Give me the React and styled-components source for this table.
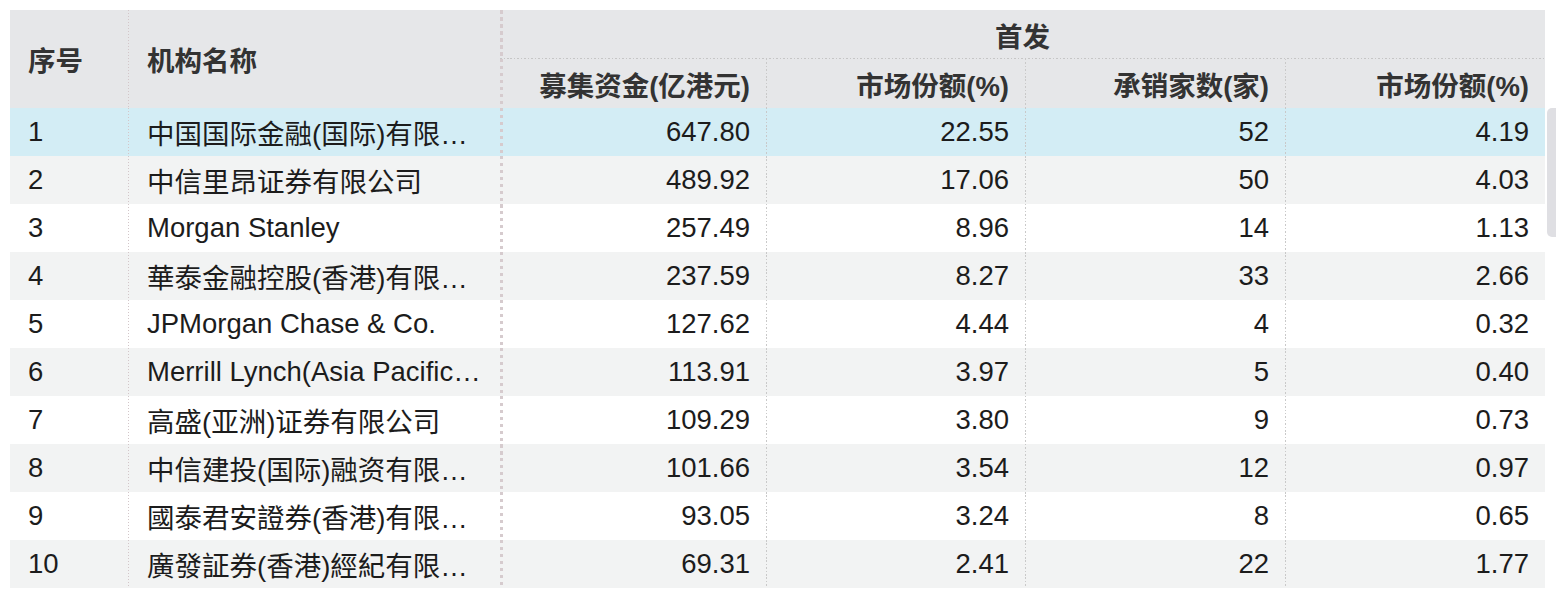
import React from 'react';
import styled, { createGlobalStyle, css } from 'styled-components';

const GlobalStyle = createGlobalStyle`
    html, body {
        margin: 0;
        padding: 0;
        background: #ffffff;
    }
    body {
        font-family: "Liberation Sans", "Noto Sans CJK SC", sans-serif;
    }
`;

const rows = [
    ['1', '中国国际金融(国际)有限公司', '647.80', '22.55', '52', '4.19'],
    ['2', '中信里昂证券有限公司', '489.92', '17.06', '50', '4.03'],
    ['3', 'Morgan Stanley', '257.49', '8.96', '14', '1.13'],
    ['4', '華泰金融控股(香港)有限公司', '237.59', '8.27', '33', '2.66'],
    ['5', 'JPMorgan Chase & Co.', '127.62', '4.44', '4', '0.32'],
    ['6', 'Merrill Lynch(Asia Pacific) Limited', '113.91', '3.97', '5', '0.40'],
    ['7', '高盛(亚洲)证券有限公司', '109.29', '3.80', '9', '0.73'],
    ['8', '中信建投(国际)融资有限公司', '101.66', '3.54', '12', '0.97'],
    ['9', '國泰君安證券(香港)有限公司', '93.05', '3.24', '8', '0.65'],
    ['10', '廣發証券(香港)經紀有限公司', '69.31', '2.41', '22', '1.77'],
];

// column separators drawn at the left edge of a cell
const seps = {
    pink: 'repeating-linear-gradient(to bottom, #d3c6c9 0 1px, transparent 1px 3px)',
    thick: 'repeating-linear-gradient(to bottom, #d6cbce 0 3.5px, transparent 3.5px 7px)',
    gray: 'repeating-linear-gradient(to bottom, #c9c9c9 0 1.5px, transparent 1.5px 3.4px)',
};
const sepWidth = { pink: '1px', thick: '3px', gray: '1px' };

const sepStyle = css`
    ${p => p.$sep && css`
        background-image: ${seps[p.$sep]};
        background-size: ${sepWidth[p.$sep]} 100%;
        background-repeat: no-repeat;
        background-position: 0 0;
    `}
`;

const Page = styled.div`
    position: relative;
    padding: 10px 11px 4px 10px;
`;

const Table = styled.table`
    width: 1535px;
    table-layout: fixed;
    border-collapse: collapse;
    border-spacing: 0;
    font-size: 27.5px;
`;

const HeadRow = styled.tr`
    height: 49px;
    background: #e6e7e9;
`;

const Th = styled.th`
    padding: 0 ${p => p.$left ? '0' : '16px'} 0 ${p => p.$pl || '0'};
    text-align: ${p => p.$align || 'right'};
    font-weight: bold;
    color: #333333;
    white-space: nowrap;
    vertical-align: middle;
    ${sepStyle}
`;

const GroupTh = styled(Th)`
    background-image: ${seps.thick},
        repeating-linear-gradient(to right, #c6c6c6 0 1.5px, transparent 1.5px 3.5px);
    background-size: 3px 100%, 100% 1px;
    background-position: 0 0, 0 100%;
    background-repeat: no-repeat;
    padding: 0;
`;

const Row = styled.tr`
    height: 48px;
    background: ${p => p.$active ? '#d3edf5' : p.$even ? '#f2f3f3' : '#ffffff'};
`;

const Td = styled.td`
    padding: 0 16px 0 0;
    text-align: right;
    color: #1c1c1c;
    white-space: nowrap;
    vertical-align: middle;
    ${sepStyle}
`;

const IndexCell = styled(Td)`
    padding-left: 18px;
    text-align: left;
`;

const NameCell = styled(Td)`
    padding: 0 17px 0 19px;
    text-align: left;
    overflow: hidden;
    text-overflow: ellipsis;
`;

const Thumb = styled.div`
    position: absolute;
    top: 108px;
    right: 0;
    width: 9px;
    height: 129px;
    border-radius: 5px 0 0 5px;
    background: #dfdfe3;
`;

export default function App() {
    return (
        <Page>
            <GlobalStyle />
            <Table>
                <colgroup>
                    <col style={{ width: 118 }} />
                    <col style={{ width: 372 }} />
                    <col style={{ width: 266 }} />
                    <col style={{ width: 259 }} />
                    <col style={{ width: 260 }} />
                    <col style={{ width: 260 }} />
                </colgroup>
                <thead>
                    <HeadRow>
                        <Th rowSpan={2} $align='left' $left $pl='18px'>序号</Th>
                        <Th rowSpan={2} $align='left' $left $pl='19px' $sep='pink'>机构名称</Th>
                        <GroupTh colSpan={4} $align='center'>首发</GroupTh>
                    </HeadRow>
                    <HeadRow>
                        <Th $sep='thick'>募集资金(亿港元)</Th>
                        <Th $sep='gray'>市场份额(%)</Th>
                        <Th $sep='gray'>承销家数(家)</Th>
                        <Th $sep='gray'>市场份额(%)</Th>
                    </HeadRow>
                </thead>
                <tbody>
                    {rows.map((r, i) => (
                        <Row key={r[0]} $active={i === 0} $even={i % 2 === 1}>
                            <IndexCell>{r[0]}</IndexCell>
                            <NameCell $sep='pink'>{r[1]}</NameCell>
                            <Td $sep='thick'>{r[2]}</Td>
                            <Td $sep='gray'>{r[3]}</Td>
                            <Td $sep='gray'>{r[4]}</Td>
                            <Td $sep='gray'>{r[5]}</Td>
                        </Row>
                    ))}
                </tbody>
            </Table>
            <Thumb />
        </Page>
    );
}
